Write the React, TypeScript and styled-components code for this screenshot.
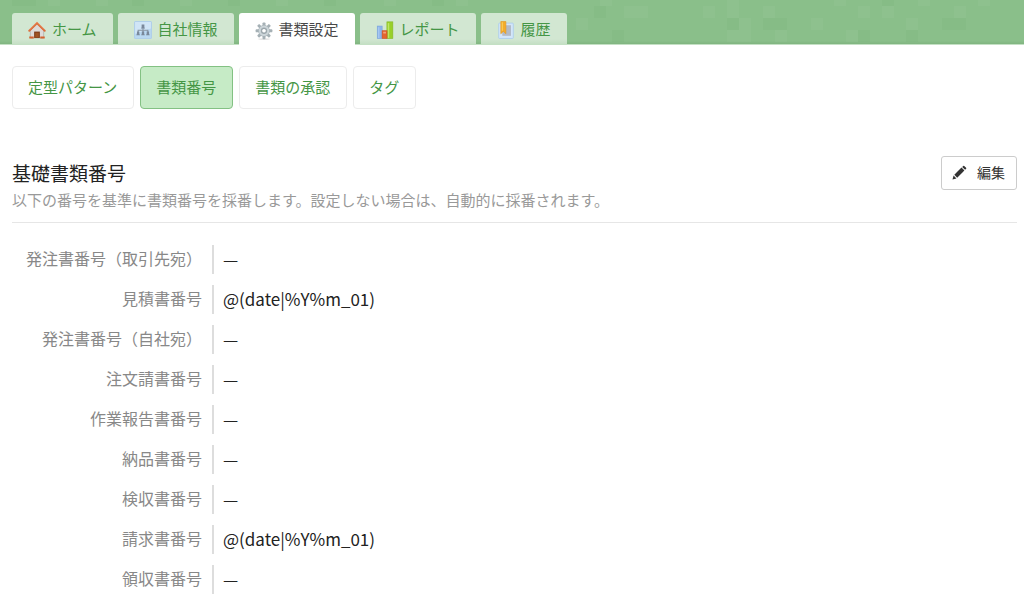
import React from "react";
import styled, { createGlobalStyle } from "styled-components";

const GlobalStyle = createGlobalStyle`
  *, *::before, *::after { box-sizing: border-box; }
  body {
    margin: 0;
    background: #fff;
    color: #222;
    font-family: "Noto Sans CJK JP", "Liberation Sans", sans-serif;
    font-size: 16px;
    line-height: 24px;
  }
`;

const Header = styled.header`
  position: relative;
  padding: 13px 12px 0;
  background: linear-gradient(to top, #80b480, #8abf8a 3px);
  border-bottom: 1px solid #c4e0c4;
`;

const Mosaic = styled.svg`
  position: absolute;
  inset: 0;
  width: 100%;
  height: 100%;
`;

const TabBar = styled.nav`
  position: relative;
  display: flex;
  gap: 5px;
`;

const Tab = styled.a<{ $active?: boolean }>`
  display: flex;
  align-items: center;
  gap: 6px;
  height: ${(p) => (p.$active ? "32px" : "31px")};
  margin-bottom: ${(p) => (p.$active ? "-1px" : "0")};
  padding: 0 16px;
  border-radius: 3px 3px 0 0;
  background: ${(p) => (p.$active ? "#fff" : "linear-gradient(#d2e7d2 26px, #c5dfc5)")};
  color: ${(p) => (p.$active ? "#484848" : "#459645")};
  font-size: 15px;
  text-decoration: none;
  white-space: nowrap;
`;

const TabIcon = styled.svg`
  flex: none;
  width: 18px;
  height: 18px;
  margin-top: 3px;
`;

const SubNav = styled.nav`
  display: flex;
  flex-wrap: wrap;
  gap: 6px;
  padding: 21px 12px 0;
`;

const SubLink = styled.a<{ $active?: boolean }>`
  padding: 9px 16px 10px 15px;
  border: 1px solid ${(p) => (p.$active ? "#83c183" : "#ececec")};
  border-radius: 4px;
  background: ${(p) => (p.$active ? "#c6ebc6" : "#fff")};
  color: #459645;
  font-size: 15px;
  line-height: 22px;
  text-decoration: none;
`;

const Section = styled.main`
  padding: 46px 7px 0 12px;
`;

const SectionHeader = styled.div`
  display: flex;
  justify-content: space-between;
  align-items: flex-start;
  gap: 16px;
  padding-bottom: 9px;
  border-bottom: 1px solid #e6e6e6;
`;

const Title = styled.h1`
  margin: 4px 0 0;
  font-size: 19px;
  font-weight: 400;
  line-height: 28px;
`;

const Description = styled.p`
  margin: 0;
  color: #999;
  font-size: 15px;
  line-height: 26px;
`;

const EditButton = styled.button`
  display: flex;
  flex: none;
  align-items: center;
  gap: 10px;
  height: 34px;
  margin-top: 1px;
  padding: 0 11px 2px 10px;
  border: 1px solid #ccc;
  border-radius: 3px;
  background: #fff;
  color: #333;
  font-family: inherit;
  font-size: 14px;
`;

const NumberList = styled.dl`
  display: grid;
  grid-template-columns: 190px 1fr;
  row-gap: 11px;
  margin: 22px 0;
`;

const Label = styled.dt`
  color: #888;
  line-height: 26px;
  text-align: right;
`;

const Value = styled.dd`
  height: 29px;
  margin: 0 0 0 10px;
  padding-left: 9px;
  border-left: 2px solid #ddd;
  font-size: 17px;
  line-height: 28px;
`;

const HomeIcon = () => (
  <TabIcon viewBox="0 0 17 17" aria-hidden="true">
    <path d="M2.2 9 8.5 3 14.8 9V16H2.2z" fill="#dedad8" stroke="#a9a3a0" strokeWidth=".6" />
    <path d="M5.8 10h5.4v6H5.8z" fill="#7d3a17" />
    <path d="M6.8 11h3.4v4.5H6.8z" fill="#a05424" />
    <path d="M1.2 9.2 8.5 2 15.8 9.2" fill="none" stroke="#dc6c38" strokeWidth="1.8" strokeLinecap="round" />
    <path d="M1.5 8.2 8.5 1.2 15.5 8.2" fill="none" stroke="#f0a27c" strokeWidth=".6" />
    <path d="M1.2 14.6h4.2v1.9H1.2zM11.6 14.6h4.2v1.9h-4.2z" fill="#d4612d" />
  </TabIcon>
);

const CompanyIcon = () => (
  <TabIcon viewBox="0 0 17 17" aria-hidden="true">
    <rect x=".5" y=".5" width="16" height="16" rx="1" fill="#b9d8f1" stroke="#b0cfe9" />
    <path d="M1 1h15v6L1 12z" fill="#d0e5f6" />
    <path d="M8.5 5v6M3.9 11V8.8h9.2V11" fill="none" stroke="#8592a1" strokeWidth="1" />
    <g fill="#79889a">
      <path d="M7.2 3.2h2.6v2.6l.7 1.4h-4l.7-1.4z" />
      <path d="M2.8 9.8h2.2v2l.6 1.7H2.2l.6-1.7z" />
      <path d="M7.4 9.8h2.2v2l.6 1.7H6.8l.6-1.7z" />
      <path d="M12 9.8h2.2v2l.6 1.7h-3.4l.6-1.7z" />
    </g>
  </TabIcon>
);

const GearIcon = () => (
  <TabIcon viewBox="0 0 17 17" aria-hidden="true">
    <ellipse cx="8.5" cy="16.1" rx="6" ry=".8" fill="#e4e4e4" />
    <g fill="#a5b0b5">
      {[0, 45, 90, 135].map((angle) => (
        <rect key={angle} x="7.1" y=".4" width="2.8" height="15.8" rx=".8" transform={`rotate(${angle} 8.5 8.3)`} />
      ))}
    </g>
    <circle cx="8.5" cy="8.3" r="5.5" fill="#a5b0b5" />
    <circle cx="8.5" cy="8.3" r="4" fill="none" stroke="#ccd5d9" strokeWidth="2" />
    <circle cx="8.5" cy="8.3" r="2.2" fill="#fff" stroke="#8b989e" strokeWidth=".8" />
  </TabIcon>
);

const ReportIcon = () => (
  <TabIcon viewBox="0 0 17 17" aria-hidden="true">
    <rect x="1.2" y="4.8" width="4.6" height="11.7" fill="#8db4ea" stroke="#7aa3dc" strokeWidth=".6" />
    <path d="M2.6 6v10" stroke="#b0cdf3" />
    <rect x="10.3" y=".8" width="5.6" height="15.7" fill="#98d028" stroke="#86b928" strokeWidth=".6" />
    <path d="M11.8 2v14" stroke="#bfe667" strokeWidth="1.4" />
    <rect x="5.8" y="9.2" width="4.6" height="7.3" fill="#e4652e" stroke="#cc4f22" strokeWidth=".6" />
    <path d="M6.8 11h2.6" stroke="#f3a27c" strokeWidth="1.6" />
  </TabIcon>
);

const HistoryIcon = () => (
  <TabIcon viewBox="0 0 17 17" aria-hidden="true">
    <rect x="1.6" y="2" width="13.8" height="14.5" rx=".8" fill="#d3e6f9" stroke="#a6c9ec" strokeWidth=".7" />
    <rect x="5" y="4" width="8.2" height="10" fill="#b3bac6" />
    <path d="M3.6.5H8.4V12L6 9.8 3.6 12z" fill="#f3ac2a" stroke="#e39a24" strokeWidth=".6" />
    <path d="M5 1.2v8" stroke="#fbd05f" />
  </TabIcon>
);

const PencilIcon = () => (
  <svg width="15" height="15" viewBox="0 0 15 15" fill="#333" aria-hidden="true">
    <path d="M.5 14.5 1.6 10.6 4.4 13.4z" />
    <path d="M2.3 9.8 9.5 2.6 12.4 5.5 5.2 12.7z" />
    <path d="M10.2 1.9 11.2.9Q11.7.4 12.2.9L14.1 2.8Q14.6 3.3 14.1 3.8L13.1 4.8z" />
  </svg>
);

const tabs = [
  { label: "ホーム", Icon: HomeIcon },
  { label: "自社情報", Icon: CompanyIcon },
  { label: "書類設定", Icon: GearIcon, active: true },
  { label: "レポート", Icon: ReportIcon },
  { label: "履歴", Icon: HistoryIcon },
];

const subLinks = [
  { label: "定型パターン" },
  { label: "書類番号", active: true },
  { label: "書類の承認" },
  { label: "タグ" },
];

const numbers = [
  ["発注書番号（取引先宛）", "—"],
  ["見積書番号", "@(date|%Y%m_01)"],
  ["発注書番号（自社宛）", "—"],
  ["注文請書番号", "—"],
  ["作業報告書番号", "—"],
  ["納品書番号", "—"],
  ["検収書番号", "—"],
  ["請求書番号", "@(date|%Y%m_01)"],
  ["領収書番号", "—"],
];

const lightTiles = [
  [703, 6], [727, -6], [727, 6], [763, 6], [834, -6], [858, 6], [882, 6], [811, 18],
  [739, 18], [727, 30], [739, 30], [775, 30], [846, 30], [906, 18], [918, -6], [978, -6], [954, 6],
  [600, -6], [624, 6], [636, 6], [576, 18], [48, -6], [96, -6], [180, -6], [276, -6], [384, -6], [456, -6],
];
const darkTiles = [
  [727, 18], [763, 18], [775, 18], [858, 30], [906, 30], [882, -6], [942, 18], [954, 18],
  [594, 6], [612, 30], [12, -6], [24, -6], [132, -6], [228, -6], [324, -6], [432, -6],
];

export default function App() {
  return (
    <>
      <GlobalStyle />
      <Header>
        <Mosaic aria-hidden="true">
          {lightTiles.map(([x, y]) => (
            <rect key={`l${x}.${y}`} x={x} y={y} width="12" height="12" fill="#fff" opacity=".04" />
          ))}
          {darkTiles.map(([x, y]) => (
            <rect key={`d${x}.${y}`} x={x} y={y} width="12" height="12" fill="#175c2a" opacity=".03" />
          ))}
        </Mosaic>
        <TabBar>
          {tabs.map(({ label, Icon, active }) => (
            <Tab key={label} href="#" $active={active} aria-current={active ? "page" : undefined}>
              <Icon />
              {label}
            </Tab>
          ))}
        </TabBar>
      </Header>
      <SubNav>
        {subLinks.map(({ label, active }) => (
          <SubLink key={label} href="#" $active={active}>
            {label}
          </SubLink>
        ))}
      </SubNav>
      <Section>
        <SectionHeader>
          <div>
            <Title>基礎書類番号</Title>
            <Description>
              以下の番号を基準に書類番号を採番します。設定しない場合は、自動的に採番されます。
            </Description>
          </div>
          <EditButton type="button">
            <PencilIcon />
            編集
          </EditButton>
        </SectionHeader>
        <NumberList>
          {numbers.map(([label, value]) => (
            <React.Fragment key={label}>
              <Label>{label}</Label>
              <Value>{value}</Value>
            </React.Fragment>
          ))}
        </NumberList>
      </Section>
    </>
  );
}
